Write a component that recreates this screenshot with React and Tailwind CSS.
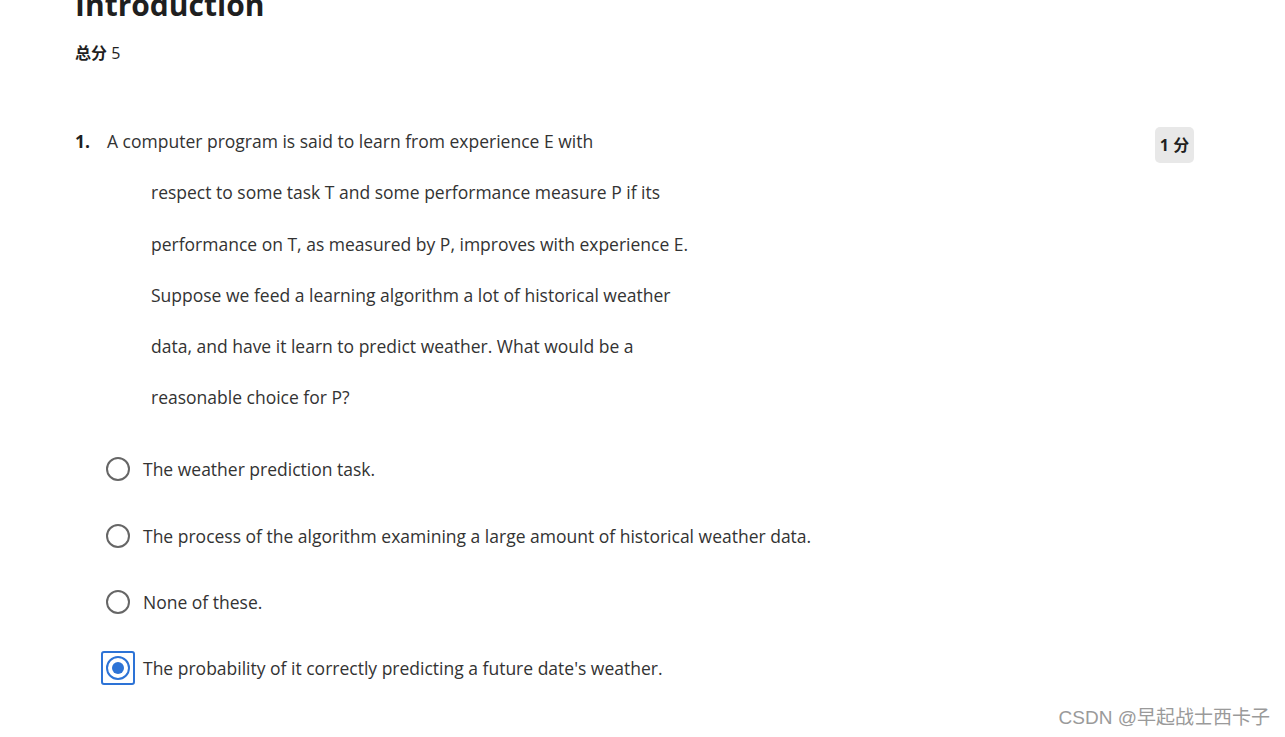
import React from 'react';

const QUESTION_LINES = [
    'respect to some task T and some performance measure P if its',
    'performance on T, as measured by P, improves with experience E.',
    'Suppose we feed a learning algorithm a lot of historical weather',
    'data, and have it learn to predict weather. What would be a',
    'reasonable choice for P?',
];

const OPTIONS = [
    'The weather prediction task.',
    'The process of the algorithm examining a large amount of historical weather data.',
    'None of these.',
    "The probability of it correctly predicting a future date's weather.",
];

const Radio = ({ checked }) => (
    <span
        className={`flex items-center justify-center w-[34px] h-[34px] rounded-[3px] border-2 ${
            checked ? 'border-[#2d73d6]' : 'border-transparent'
        }`}
    >
        <span
            className={`flex items-center justify-center w-[24px] h-[24px] rounded-full border-2 ${
                checked ? 'border-[#2d73d6]' : 'border-[#666]'
            }`}
        >
            {checked && <span className="w-[12px] h-[12px] rounded-full bg-[#2d73d6]" />}
        </span>
    </span>
);

const App = () => {
    const selected = 3;

    return (
        <div
            className="relative h-[737px] overflow-hidden bg-white text-[#333]"
            style={{ fontFamily: '"Open Sans", "Noto Sans CJK SC", sans-serif' }}
        >
            <div className="pl-[75px] pr-[91px]">
                {/* Quiz header */}
                <h1 className="-mt-[13px] text-[30px] leading-[36px] font-bold text-[#1f1f1f]">
                    Introduction
                </h1>
                <p className="mt-[18px] text-[16px] leading-[24px] text-[#1f1f1f]">
                    <span className="font-bold">总分</span> 5
                </p>

                {/* Question 1 */}
                <div className="mt-[63px] flex items-start">
                    <div className="flex-1">
                        <div className="flex text-[17.5px] leading-[26px]">
                            <span className="w-[32px] font-bold text-[#1f1f1f]">1.</span>
                            <span>A computer program is said to learn from experience E with</span>
                        </div>
                        {QUESTION_LINES.map(line => (
                            <p key={line} className="mt-[25.3px] pl-[76px] text-[17.5px] leading-[26px]">
                                {line}
                            </p>
                        ))}
                    </div>
                    <span className="mt-[-1px] flex items-center justify-center w-[39px] h-[36px] rounded-[5px] bg-[#e8e8e8] text-[16px] font-bold text-[#1f1f1f]">
                        1 分
                    </span>
                </div>

                {/* Answer options */}
                <div className="mt-[42px] pl-[26px] flex flex-col gap-[32.3px]">
                    {OPTIONS.map((option, i) => (
                        <label key={option} className="flex items-center gap-[8px] text-[17.5px] leading-[34px]">
                            <Radio checked={i === selected} />
                            <span>{option}</span>
                        </label>
                    ))}
                </div>
            </div>

            {/* Watermark */}
            <div
                className="absolute right-[15px] bottom-[5px] text-[19px] text-[#9a9a9a]"
                style={{ fontFamily: '"Liberation Sans", "Noto Sans CJK SC", sans-serif' }}
            >
                CSDN @早起战士西卡子
            </div>
        </div>
    );
};

export default App;
